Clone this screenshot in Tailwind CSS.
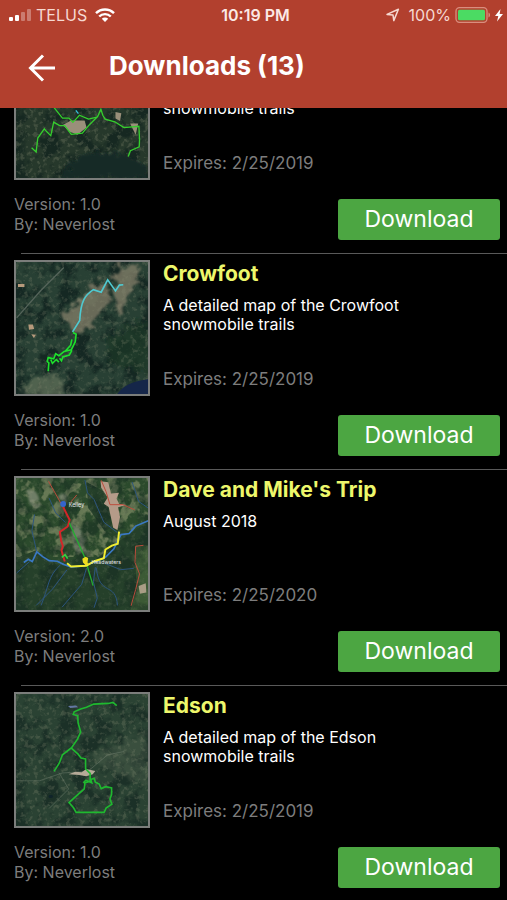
<!DOCTYPE html>
<html lang="en">

<head>
    <meta charset="UTF-8">
    <meta name="viewport" content="width=device-width, initial-scale=1.0">
    <title>Downloads</title>
    <script src="https://cdn.jsdelivr.net/npm/@tailwindcss/browser@4"></script>
</head>

<body class="flex flex-col h-screen overflow-hidden bg-black text-white font-['Inter',sans-serif]">

    <!-- Shared terrain textures -->
    <svg class="absolute w-0 h-0" aria-hidden="true">
        <defs>
            <filter id="patches" x="0" y="0" width="100%" height="100%" color-interpolation-filters="sRGB">
                <feTurbulence type="fractalNoise" baseFrequency="0.03" numOctaves="3" seed="4" />
                <feColorMatrix values="0 0 0 0 0.4  0 0 0 0 0.47  0 0 0 0 0.33  7 0 0 0 -3.5" />
            </filter>
            <filter id="shade" x="0" y="0" width="100%" height="100%" color-interpolation-filters="sRGB">
                <feTurbulence type="fractalNoise" baseFrequency="0.02" numOctaves="5" seed="9" />
                <feColorMatrix values="0 0 0 0 0.05  0 0 0 0 0.12  0 0 0 0 0.11  0 5 0 0 -2.2" />
            </filter>
            <filter id="grain" x="0" y="0" width="100%" height="100%" color-interpolation-filters="sRGB">
                <feTurbulence type="fractalNoise" baseFrequency="0.07" numOctaves="3" seed="2" />
                <feColorMatrix values="0 0 0 0 0.55  0 0 0 0 0.56  0 0 0 0 0.46  0 0 5 0 -2.6" />
            </filter>
            <filter id="rough" x="-20%" y="-20%" width="140%" height="140%">
                <feTurbulence type="fractalNoise" baseFrequency="0.04" numOctaves="3" seed="7" />
                <feDisplacementMap in="SourceGraphic" scale="50" />
                <feGaussianBlur stdDeviation="4" />
            </filter>
        </defs>
    </svg>

    <header class="relative z-10 shrink-0 h-[108px] bg-[#b2402e]">
        <!-- Status bar -->
        <div class="grid grid-cols-3 items-center h-[30px] pl-2 pr-1 text-base text-[#f6d9d2]">
            <div class="flex items-center gap-1">
                <svg class="w-6 h-4" viewBox="0 0 24 16">
                    <rect x="1" y="10" width="4" height="4" rx="1" fill="#fff" />
                    <rect x="7" y="8" width="4" height="6" rx="1" fill="#fff" />
                    <rect x="13" y="5" width="4" height="9" rx="1" fill="#cb7c70" />
                    <rect x="19" y="2" width="4" height="12" rx="1" fill="#cb7c70" />
                </svg>
                <span>TELUS</span>
                <svg class="w-5 h-4 ml-1" viewBox="0 0 20 16" fill="none" stroke="#fff" stroke-width="2.4">
                    <path d="M1 6.2a12.7 12.7 0 0 1 18 0" />
                    <path d="M4.2 9.5a8.2 8.2 0 0 1 11.6 0" />
                    <path d="M10 15l-3.2-3.3a4.6 4.6 0 0 1 6.4 0z" fill="#fff" stroke="none" />
                </svg>
            </div>
            <span class="text-center font-semibold text-[#fbe9e5]">10:19 PM</span>
            <div class="flex items-center justify-end gap-1">
                <svg class="w-4 h-4 mr-1" viewBox="0 0 16 16" fill="none" stroke="#f6d9d2" stroke-width="1.5" stroke-linejoin="round">
                    <path d="M2 7.4L13.4 2.3 8.8 13.6 8 8z" />
                </svg>
                <span>100%</span>
                <svg class="w-9 h-4" viewBox="0 0 36 16">
                    <rect x="1" y="0.7" width="31" height="14.6" rx="3.5" fill="none" stroke="#d98e7e" stroke-width="1.3" />
                    <rect x="3" y="2.7" width="27" height="10.6" rx="1.5" fill="#4bdb63" />
                    <path d="M33.5 5.5c2 .8 2 4.2 0 5z" fill="#d98e7e" />
                </svg>
                <svg class="w-2 h-4" viewBox="0 0 8 16">
                    <path d="M5.5 2L0 9h3.3L2 14.5 8 7H4.6z" fill="#fff" />
                </svg>
            </div>
        </div>

        <!-- Title bar -->
        <div class="flex items-center h-[72px] pl-7">
            <button type="button" aria-label="Back" class="mt-1">
                <svg class="w-7 h-7" viewBox="0 0 28 28" fill="none" stroke="#fff" stroke-width="3">
                    <path d="M27 14H2.5M15 1.5L2.5 14 15 26.5" />
                </svg>
            </button>
            <h1 class="ml-[53px] text-[26px] leading-8 font-bold">Downloads (13)</h1>
        </div>
    </header>

    <main class="flex-1 min-h-0">
        <ul class="-mt-[70px]">
            <li>
                <article class="h-[215px] pt-[6px] pl-[14px] pr-[7px]">
                    <div class="flex gap-[13px]">
                        <svg class="shrink-0 w-[136px] h-[136px] border-2 border-[#7b7d7b]" viewBox="18 18 406 406">
                            <rect width="430" height="430" fill="#26382b" />
                            <rect width="430" height="430" filter="url(#shade)" opacity=".6" />
                            <rect width="430" height="430" filter="url(#grain)" opacity=".28" />
                            <path d="M150 424L180 380 240 350 330 345 424 390V424z" fill="#152927" filter="url(#rough)" />
                            <g transform="translate(-26 186)" fill="none" stroke="#35cf2d" stroke-width="4">
                                <path d="M188 75l25-14 42 0 6 22-28 22-25-10z M395 70l25 0-8 35z M350 35l18 4-4 24-14-8z" fill="#9a8f7a" stroke="none" />
                                <path d="M92 145l14 13 5-43 20-28 8 9 12 12 9-42 18 11 16 0 20 27 34-4 20-24 27-27 10-22 6 18 7 12 30 8 28 18 46-4 2 40-1 23-27 12-7 18" />
                                <path d="M160 20l27 34 20 0 12 13 20-22 28 12 26-6" />
                                <path d="M228 30l8 10" stroke="#35c3dc" />
                            </g>
                        </svg>
                        <div>
                            <p class="h-[93px] pt-[55px] pr-16 text-base leading-[19px]">snowmobile trails</p>
                            <p class="mt-4 text-[17px] leading-5 text-[#7d7d7d]">Expires: 2/25/2019</p>
                        </div>
                    </div>
                    <div class="flex justify-between mt-[14px]">
                        <p class="text-base leading-5 text-[#7d7d7d]">Version: 1.0<br>By: Neverlost</p>
                        <button type="button" class="w-[162px] h-[41px] mt-[5px] rounded-[3px] bg-[#4ca642] text-[23px]">Download</button>
                    </div>
                </article>
                <hr class="ml-[21px] border-[#595959]">
            </li>

            <li>
                <article class="h-[215px] pt-[6px] pl-[14px] pr-[7px]">
                    <div class="flex gap-[13px]">
                        <svg class="shrink-0 w-[136px] h-[136px] border-2 border-[#7b7d7b]" viewBox="18 18 406 406">
                            <rect width="430" height="430" fill="#284034" />
                            <rect width="430" height="430" filter="url(#shade)" opacity=".7" />
                            <path d="M245 95L290 75 310 130 280 175 230 235 195 235 165 185 215 145z M330 30L400 25 380 110 330 180 320 120z" fill="#85806a" opacity=".75" filter="url(#rough)" />
                            <path d="M30 430L65 370 165 375 165 430z" fill="#6c7961" opacity=".6" filter="url(#rough)" />
                            <path d="M300 250L424 190V360L300 330z" fill="#1f3728" opacity=".7" filter="url(#rough)" />
                            <rect width="430" height="430" filter="url(#grain)" opacity=".24" />
                            <path d="M20 190L95 105 165 35" fill="none" stroke="#55645a" stroke-width="4" />
                            <path d="M56 210l14 0 4 14-16 2z M65 240l14 2-6 10z M24 86h20v9H24z" fill="#b79a7c" />
                            <path d="M330 424c15-22 40-38 94-45v45z" fill="#152649" />
                            <path d="M348 88l-12 1-12 18-24-34-20 38-24-8c-24 16-39 32-42 95l-22 35" fill="none" stroke="#4fc9d0" stroke-width="5" />
                            <path d="M193 235l10 5-3 24-12 24-22 5-16 13-10-6-6 16-17-4-3 12 5 4-2 26M190 256l-4 18-18 20M190 290l-8 14-20 6-4 12-6-8M125 318l5 12 12-12 8 8" fill="none" stroke="#1ee02c" stroke-width="5" />
                        </svg>
                        <div>
                            <h2 class="h-[26px] mt-px text-[21px] leading-[26px] font-bold text-[#edf76b]">Crowfoot</h2>
                            <p class="h-[66px] pt-[9px] pr-16 text-base leading-[19px]">A detailed map of the Crowfoot snowmobile trails</p>
                            <p class="mt-4 text-[17px] leading-5 text-[#7d7d7d]">Expires: 2/25/2019</p>
                        </div>
                    </div>
                    <div class="flex justify-between mt-[14px]">
                        <p class="text-base leading-5 text-[#7d7d7d]">Version: 1.0<br>By: Neverlost</p>
                        <button type="button" class="w-[162px] h-[41px] mt-[5px] rounded-[3px] bg-[#4ca642] text-[23px]">Download</button>
                    </div>
                </article>
                <hr class="ml-[21px] border-[#595959]">
            </li>

            <li>
                <article class="h-[215px] pt-[6px] pl-[14px] pr-[7px]">
                    <div class="flex gap-[13px]">
                        <svg class="shrink-0 w-[136px] h-[136px] border-2 border-[#7b7d7b]" viewBox="18 18 406 406">
                            <rect width="430" height="430" fill="#2b4a2c" />
                            <rect width="430" height="260" filter="url(#patches)" />
                            <path d="M18 265L80 240 150 285 235 290 330 215 424 150V424H18z M235 30L290 60 315 170 290 180 240 110z" fill="#25402a" />
                            <path d="M385 225h39v199h-54l18-60z" fill="#3c5a35" />
                            <path d="M55 60l30 5 5 25-25 20zM150 55l22 10-8 25-20-15zM190 160l25 10 20 75-20 15-20-30z" fill="#8d9480" opacity=".7" filter="url(#rough)" />
                            <rect width="430" height="430" filter="url(#shade)" opacity=".35" />
                            <rect width="430" height="430" filter="url(#grain)" opacity=".15" />
                            <path d="M278 28l24 3 8 35 25-3-8 18 8 16 22 4-25 7 6 30-8 40-13-7-14-64-15-10 12-19-20-30z" fill="#b59b89" />
                            <path d="M395 350l22-8 2 28-20 4z" fill="#a99d85" />
                            <g fill="none" stroke="#2c557f" stroke-width="3">
                                <path d="M230 24l8 40 20 20 30 70 42 32M120 80l20 45 30 30M75 130l-8 50 14 62M375 30l20 60 29 20M155 285c-40 35-35 65-60 125M175 300l-45 60-50 50M60 275l-40 35M235 295l-15 50-60 70M262 292l-6 45 12 50-10 30M265 295c10 90 60 40 65 115M290 280l50 20 40-4" />
                            </g>
                            <path d="M42 278l14-10 12 7 14-30 18 15 20 12 25 2 20 10 24 8 40-4 40-15 25-12 25-25 22-44 25-3 20-23 48-20" fill="none" stroke="#3a78c4" stroke-width="5" />
                            <path d="M118 28l45 80M280 25l15 35 12 40 40 0 36 16M205 70l-20 24M410 225l-24 3-2 50 14 35-12 48-14 50" fill="none" stroke="#bd4c3c" stroke-width="3" />
                            <path d="M163 107l20 40-6 20-24 17 4 28 5 15-4 14 10 34" fill="none" stroke="#d32629" stroke-width="6" />
                            <path d="M182 156l47 105 26 88" fill="none" stroke="#24ad31" stroke-width="4" />
                            <path d="M175 280l12 10 47-2 25-14 29-9 5-27 20-12 18-6 4-37" fill="none" stroke="#f2ee32" stroke-width="6" />
                            <path d="M222 266l10-6 8 4-2 14 4 6-10 2-8-8z" fill="#efdc20" />
                            <circle cx="163" cy="98" r="9" fill="#3565cd" />
                            <path d="M159 262l10-8 8 12" fill="none" stroke="#33d441" stroke-width="5" />
                            <text x="180" y="108" font-size="17" fill="#e6e8ea">Kelley</text>
                            <text x="250" y="281" font-size="16" fill="#e6e8ea">Headwaters</text>
                        </svg>
                        <div>
                            <h2 class="h-[26px] mt-px text-[21px] leading-[26px] font-bold text-[#edf76b]">Dave and Mike's Trip</h2>
                            <p class="h-[66px] pt-[9px] pr-16 text-base leading-[19px]">August 2018</p>
                            <p class="mt-4 text-[17px] leading-5 text-[#7d7d7d]">Expires: 2/25/2020</p>
                        </div>
                    </div>
                    <div class="flex justify-between mt-[14px]">
                        <p class="text-base leading-5 text-[#7d7d7d]">Version: 2.0<br>By: Neverlost</p>
                        <button type="button" class="w-[162px] h-[41px] mt-[5px] rounded-[3px] bg-[#4ca642] text-[23px]">Download</button>
                    </div>
                </article>
                <hr class="ml-[21px] border-[#595959]">
            </li>

            <li>
                <article class="h-[215px] pt-[6px] pl-[14px] pr-[7px]">
                    <div class="flex gap-[13px]">
                        <svg class="shrink-0 w-[136px] h-[136px] border-2 border-[#7b7d7b]" viewBox="18 18 406 406">
                            <rect width="430" height="430" fill="#2a4233" />
                            <rect width="430" height="430" filter="url(#shade)" opacity=".5" />
                            <rect width="430" height="430" filter="url(#grain)" opacity=".26" />
                            <path d="M245 215L340 165 424 130V300L330 265z" fill="#738067" opacity=".22" filter="url(#rough)" />
                            <path d="M20 285l70 0 70-24 80-5M240 255l60-50 50-10M150 260l30 50-60 60" fill="none" stroke="#71806f" stroke-width="3" opacity=".5" />
                            <path d="M180 265l20-8 20 2 14-10 28 6-8 10-20 6-22-4z" fill="#b5aa98" />
                            <path d="M178 55l25-2 6 6-24 2z" fill="#6477a4" />
                            <ellipse cx="125" cy="333" rx="7" ry="5" fill="#10242a" />
                            <path d="M328 54l-12-10-14 3-45 2-22 10-18 5-20 9-3 8 14 4 1 22 8 28-10 22-18 26-28 22-10 26-16 25M189 185l20 18 9 12 14 3 0 30 14 14 0 24-16 6-2 18-25 22-22 20 14 16 8 14h86l6-13 18-12-6-16 5-14 0-20-18-4-14 6-6-14-12-6-4-12-10 4 3 10-18-8-8 8" fill="none" stroke="#1fb92f" stroke-width="5" />
                        </svg>
                        <div>
                            <h2 class="h-[26px] mt-px text-[21px] leading-[26px] font-bold text-[#edf76b]">Edson</h2>
                            <p class="h-[66px] pt-[9px] pr-16 text-base leading-[19px]">A detailed map of the Edson snowmobile trails</p>
                            <p class="mt-4 text-[17px] leading-5 text-[#7d7d7d]">Expires: 2/25/2019</p>
                        </div>
                    </div>
                    <div class="flex justify-between mt-[14px]">
                        <p class="text-base leading-5 text-[#7d7d7d]">Version: 1.0<br>By: Neverlost</p>
                        <button type="button" class="w-[162px] h-[41px] mt-[5px] rounded-[3px] bg-[#4ca642] text-[23px]">Download</button>
                    </div>
                </article>
            </li>
        </ul>
    </main>

</body>

</html>
